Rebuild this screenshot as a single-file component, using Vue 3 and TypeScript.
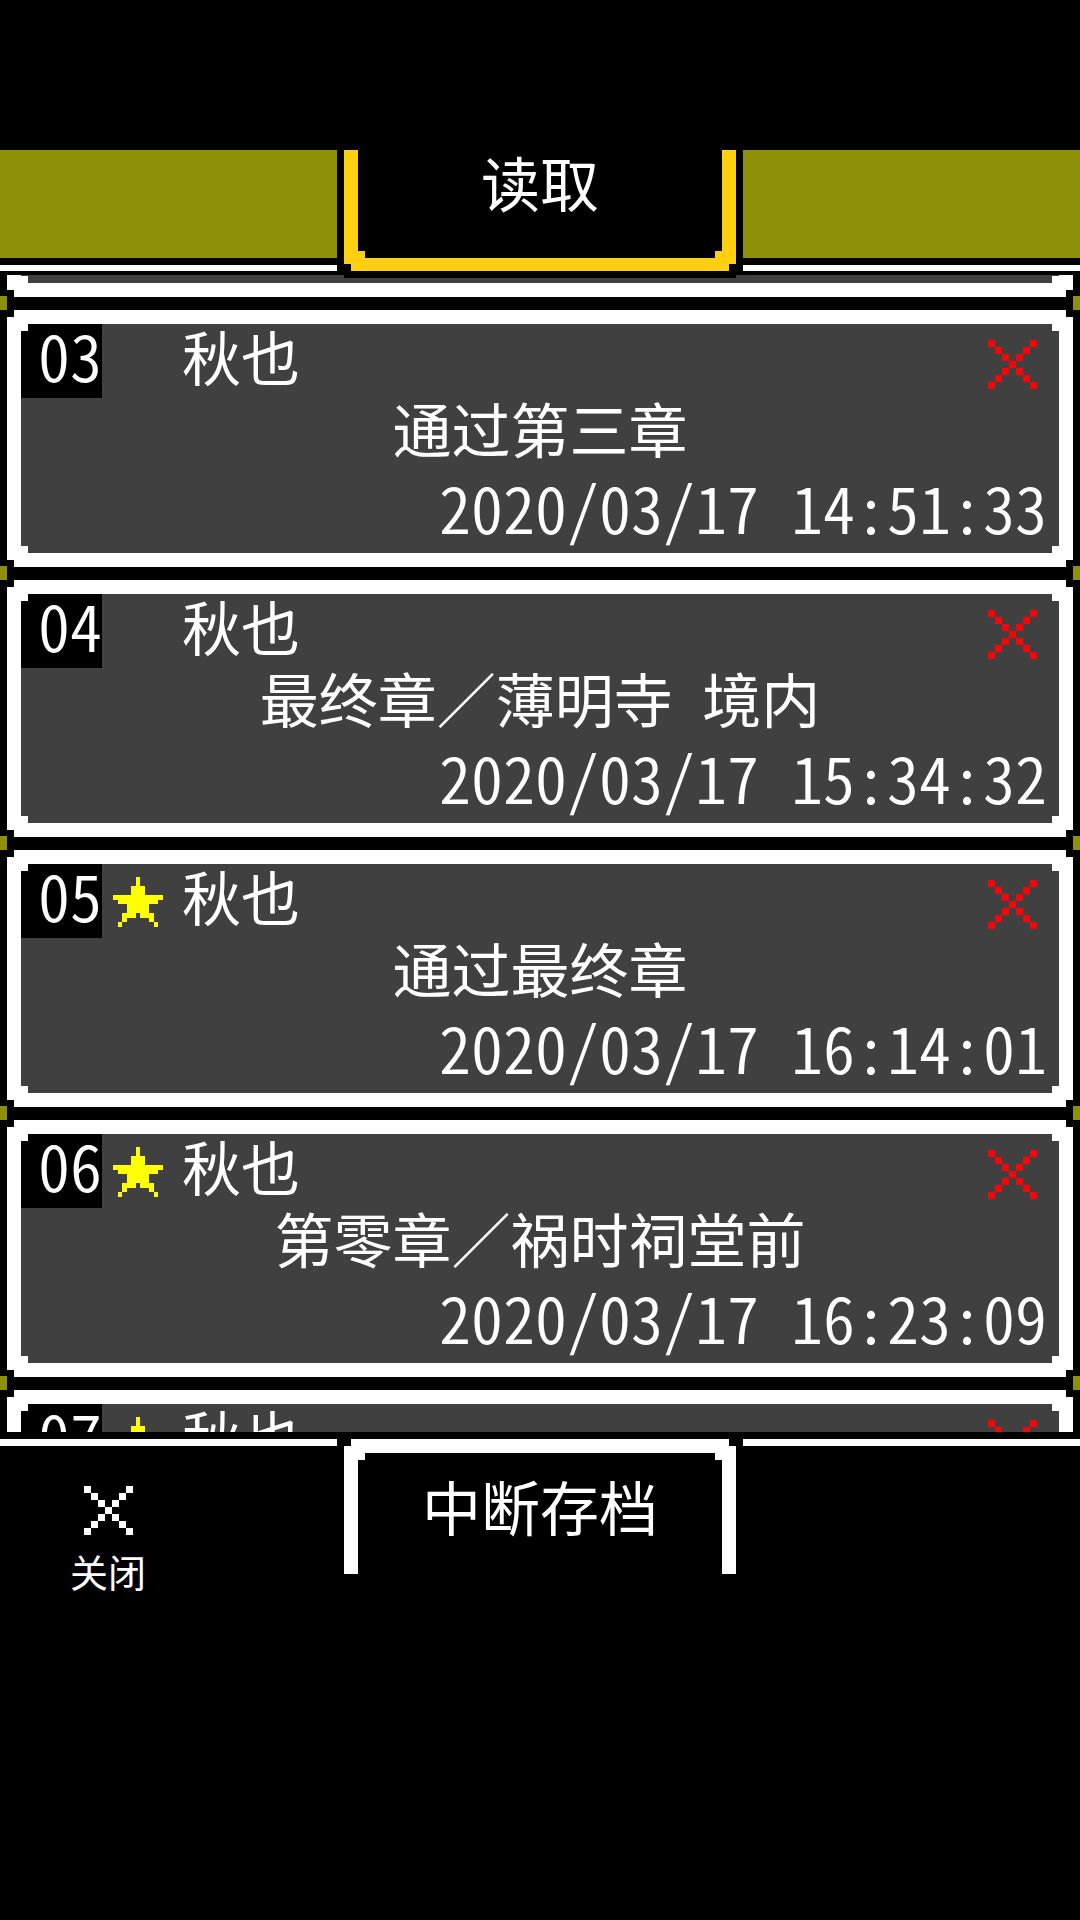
<script setup lang="ts">
interface Slot {
  no: string
  starred: boolean
  name: string
  title?: string
  date?: string
}

const slots: Slot[] = [
  { no: '03', starred: false, name: '秋也', title: '通过第三章', date: '2020/03/17 14:51:33' },
  { no: '04', starred: false, name: '秋也', title: '最终章／薄明寺\u2002境内', date: '2020/03/17 15:34:32' },
  { no: '05', starred: true, name: '秋也', title: '通过最终章', date: '2020/03/17 16:14:01' },
  { no: '06', starred: true, name: '秋也', title: '第零章／祸时祠堂前', date: '2020/03/17 16:23:09' },
  { no: '07', starred: true, name: '秋也' },
]

const crossPath =
  'M0 0h1v1h-1zM1 1h1v1h-1zM2 2h1v1h-1zM3 3h1v1h-1zM4 4h1v1h-1zM5 5h1v1h-1zM6 6h1v1h-1z' +
  'M6 0h1v1h-1zM5 1h1v1h-1zM4 2h1v1h-1zM2 4h1v1h-1zM1 5h1v1h-1zM0 6h1v1h-1z'

const starPath =
  'M5 0h1v2h-1zM4 2h3v2h-3zM0 4h11v1h-11zM1 5h9v1h-9zM3 6h5v2h-5z' +
  'M2 8h3v1h-3zM6 8h3v1h-3zM2 9h1v1h-1zM8 9h1v1h-1zM1 10h1v1h-1zM9 10h1v1h-1z'
</script>

<template>
  <main class="screen">
    <header class="header">
      <div class="header-side"></div>
      <div class="title-tab">
        <div class="title-frame">
          <h1 class="title">读取</h1>
        </div>
      </div>
      <div class="header-side"></div>
    </header>

    <ul class="list">
      <li class="slot slot-passed" aria-hidden="true">
        <div class="slot-frame"><div class="slot-body"></div></div>
      </li>
      <li v-for="slot in slots" :key="slot.no" class="slot">
        <div class="slot-frame">
          <div class="slot-body">
            <div class="slot-head">
              <span class="slot-no">{{ slot.no }}</span>
              <span class="slot-mark">
                <svg v-if="slot.starred" class="star" viewBox="0 0 11 11" shape-rendering="crispEdges">
                  <path :d="starPath" fill="#ffff00" />
                </svg>
              </span>
              <span class="slot-name">{{ slot.name }}</span>
              <button class="delete" type="button" aria-label="×">
                <svg class="cross" viewBox="0 0 7 7" shape-rendering="crispEdges">
                  <path :d="crossPath" fill="#f80509" />
                </svg>
              </button>
            </div>
            <p class="slot-title">{{ slot.title }}</p>
            <time class="slot-date">{{ slot.date }}</time>
          </div>
        </div>
      </li>
    </ul>

    <footer class="footer">
      <div class="footer-side">
        <button class="close" type="button">
          <svg class="cross" viewBox="0 0 7 7" shape-rendering="crispEdges">
            <path :d="crossPath" fill="#ffffff" />
          </svg>
          <span>关闭</span>
        </button>
      </div>
      <button class="suspend" type="button">
        <span class="suspend-frame">
          <span class="suspend-label">中断存档</span>
        </span>
      </button>
      <div class="footer-side"></div>
    </footer>
  </main>
</template>

<style>
body {
  background: #000;
}
</style>

<style scoped>
.screen {
  --s: 7px;
  box-sizing: border-box;
  display: flex;
  flex-direction: column;
  height: 100vh;
  padding-top: 150px;
  background: #000;
  color: #fff;
  font-family: 'Noto Sans CJK SC', sans-serif;
  font-size: 59px;
  font-weight: 400;
}

button {
  display: block;
  margin: 0;
  padding: 0;
  border: 0;
  background: none;
  color: inherit;
  font: inherit;
  cursor: pointer;
}

svg {
  display: block;
}

.cross {
  width: 49px;
  height: 49px;
}

/* header */
.header {
  position: relative;
  z-index: 1;
  display: grid;
  grid-template-columns: 1fr 406px 1fr;
  grid-template-rows: 121px;
  border-bottom: 4px solid #000;
}

.header-side {
  display: flex;
  flex-direction: column;
  background: #8e9008;
  border-bottom: 6px solid #fff;
}

.header-side::after {
  content: '';
  height: 7px;
  margin-top: auto;
  background: #000;
}

.title-tab {
  align-self: start;
  padding: 0 7px 7px;
  background: #000;
}

.title-tab,
.title-frame,
.title {
  clip-path: polygon(
    0 0,
    100% 0,
    100% calc(100% - var(--s)),
    calc(100% - var(--s)) calc(100% - var(--s)),
    calc(100% - var(--s)) 100%,
    var(--s) 100%,
    var(--s) calc(100% - var(--s)),
    0 calc(100% - var(--s))
  );
}

.title-frame {
  padding: 0 14px 13px;
  background: #fece10;
}

.title {
  height: 108px;
  margin: 0;
  background: #000;
  font-size: 59px;
  font-weight: 400;
  line-height: 64px;
  text-align: center;
}

/* save slots */
.list {
  flex: 1;
  min-height: 0;
  margin: 0;
  padding: 0;
  overflow: hidden;
  background: #8e9008;
  list-style: none;
}

.slot,
.slot-frame,
.slot-body {
  clip-path: polygon(
    var(--s) 0,
    calc(100% - var(--s)) 0,
    calc(100% - var(--s)) var(--s),
    100% var(--s),
    100% calc(100% - var(--s)),
    calc(100% - var(--s)) calc(100% - var(--s)),
    calc(100% - var(--s)) 100%,
    var(--s) 100%,
    var(--s) calc(100% - var(--s)),
    0 calc(100% - var(--s)),
    0 var(--s),
    var(--s) var(--s)
  );
}

.slot {
  padding: 7px 7px 6px;
  background: #000;
}

.slot-passed {
  margin-top: -242px;
}

.slot-frame {
  padding: 14px;
  background: #fff;
}

.slot-body {
  min-height: 229px;
  background: #404040;
}

.slot-head {
  display: flex;
  align-items: flex-start;
  height: 74px;
  line-height: 64px;
}

.slot-no {
  width: 81px;
  height: 74px;
  background: #000;
  line-height: 60px;
  text-align: right;
}

.slot-no,
.slot-date {
  font-size: 64px;
  font-weight: 350;
  font-feature-settings: 'hwid';
}

.slot-mark {
  display: flex;
  align-items: center;
  justify-content: center;
  width: 72px;
  height: 76px;
  margin-right: 8px;
}

.star {
  width: 50px;
  height: 50px;
}

.delete {
  display: flex;
  align-items: center;
  justify-content: center;
  width: 94px;
  height: 80px;
  margin-left: auto;
}

.slot-title {
  height: 66px;
  margin: 0;
  line-height: 60px;
  text-align: center;
  white-space: nowrap;
}

.slot-date {
  display: block;
  height: 89px;
  padding-right: 12px;
  line-height: 84px;
  text-align: right;
  white-space: nowrap;
}

/* footer */
.footer {
  display: grid;
  grid-template-columns: 1fr 406px 1fr;
  align-items: start;
  height: 481px;
  border-top: 7px solid #000;
  background: #000;
}

.footer-side {
  border-top: 7px solid #fff;
}

.close {
  display: flex;
  flex-direction: column;
  align-items: center;
  gap: 12px;
  width: 108px;
  margin: 40px 0 0 54px;
  font-size: 38px;
  line-height: 48px;
}

.suspend {
  padding: 0 7px;
}

.suspend-frame {
  display: block;
  padding: 14px 14px 0;
  background: #fff;
}

.suspend-label {
  display: block;
  height: 121px;
  background: #000;
  line-height: 106px;
}

.suspend-frame,
.suspend-label {
  clip-path: polygon(
    var(--s) 0,
    calc(100% - var(--s)) 0,
    calc(100% - var(--s)) var(--s),
    100% var(--s),
    100% 100%,
    0 100%,
    0 var(--s),
    var(--s) var(--s)
  );
}
</style>
